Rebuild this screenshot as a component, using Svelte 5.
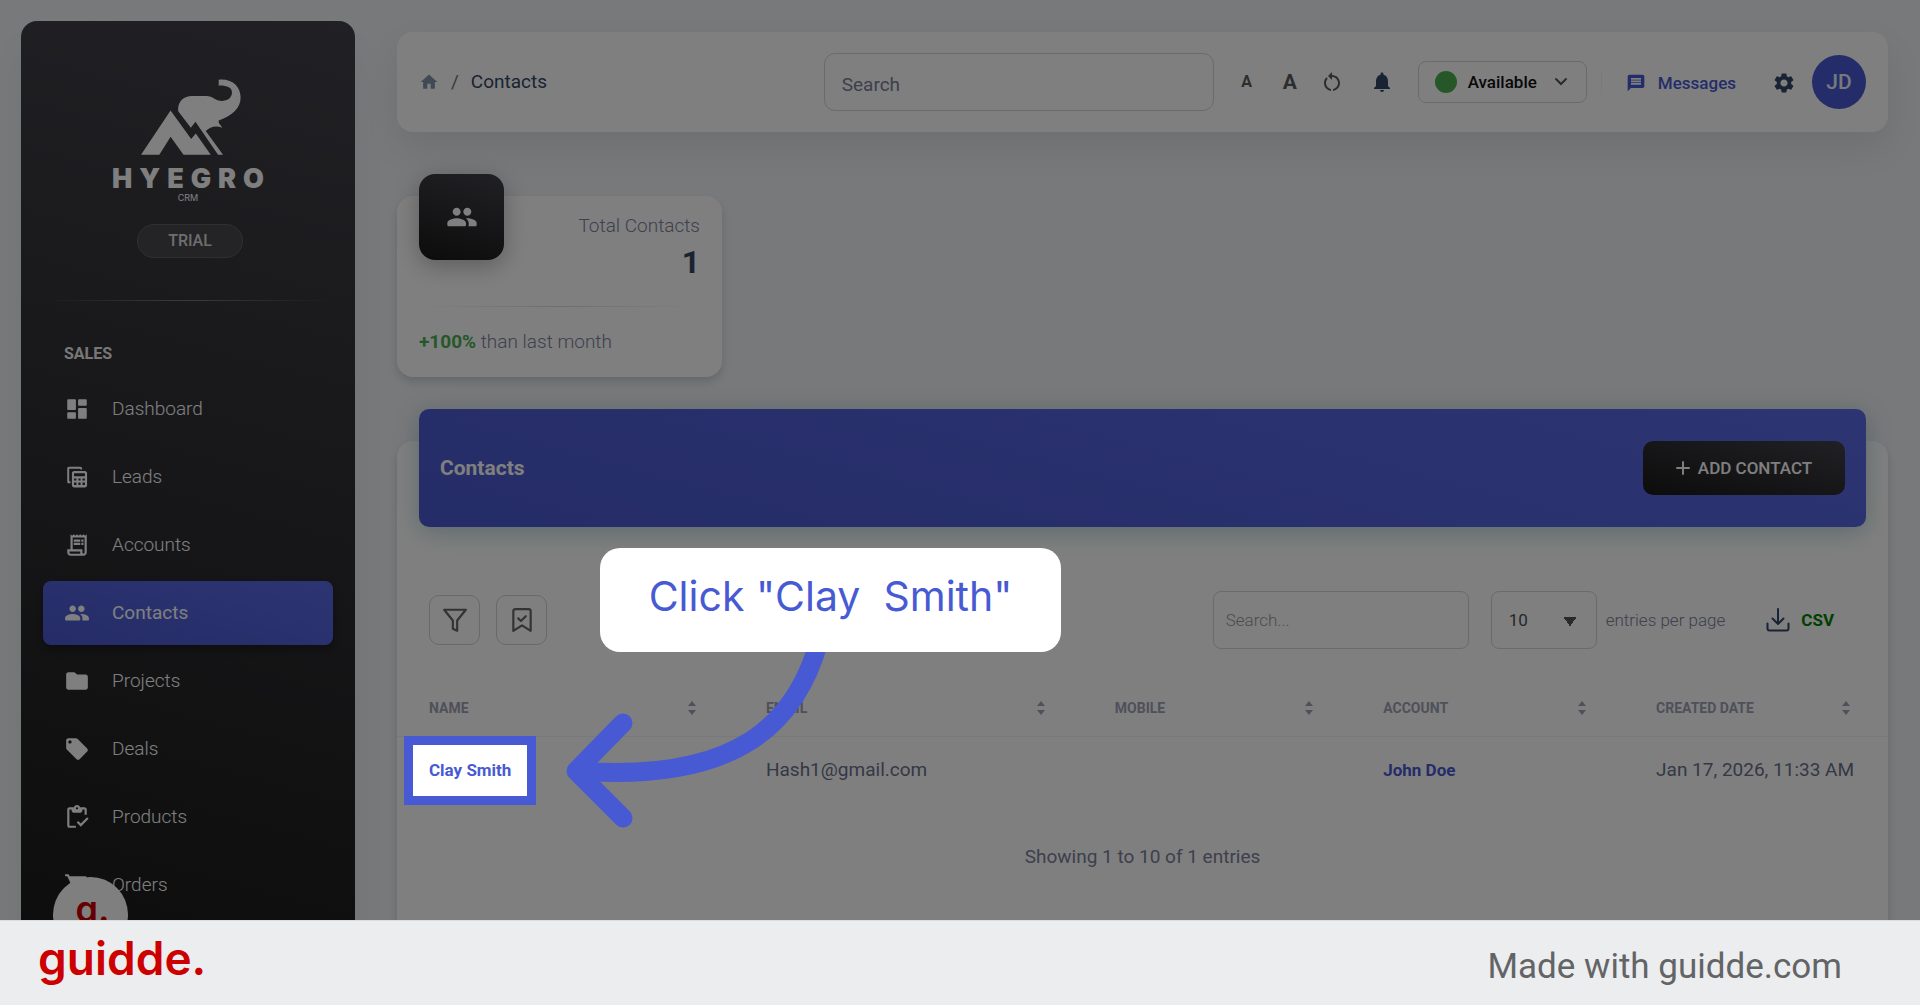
<script lang="ts">
  // Contacts page of the CRM with a guided-tour step on top of it.
  // The spotlight around the active link darkens everything else through
  // one oversized box-shadow, clipped by the stage.

  interface NavItem {
    label: string;
    icon: string;
  }

  interface Column {
    label: string;
    width: number;
  }

  const icons: Record<string, string> = {
    dashboard:
      "M4 3h6c.55 0 1 .45 1 1v8c0 .55-.45 1-1 1H4c-.55 0-1-.45-1-1V4c0-.55.45-1 1-1zm0 12h6c.55 0 1 .45 1 1v4c0 .55-.45 1-1 1H4c-.55 0-1-.45-1-1v-4c0-.55.45-1 1-1zm10-4h6c.55 0 1 .45 1 1v8c0 .55-.45 1-1 1h-6c-.55 0-1-.45-1-1v-8c0-.55.45-1 1-1zm0-8h6c.55 0 1 .45 1 1v4c0 .55-.45 1-1 1h-6c-.55 0-1-.45-1-1V4c0-.55.45-1 1-1z",
    leads:
      "M4.5 2.500H15c1 0 1.700.7 1.700 1.700V5H15V4.300H4.800V16H6v1.800H4.500C3.600 17.800 3 17.200 3 16.300V4.200c0-1 .6-1.700 1.500-1.700zM9.300 6.500h10c1.100 0 2 .9 2 2v11.200c0 1.100-.9 2-2 2h-10c-1.100 0-2-.9-2-2V8.500c0-1.100.9-2 2-2zm0 2v2.800h10V8.500zm0 4.800v1.900h2.200v-1.900zm4 0v1.900h2v-1.900zm3.800 0v1.900h2.200v-1.900zm-7.800 3.800v2.300h2.200v-2.300zm4 0v2.300h2v-2.300zm3.800 0v2.300h2.200v-2.300z",
    accounts:
      "M19.5 3.500L18 2l-1.500 1.500L15 2l-1.500 1.500L12 2l-1.500 1.500L9 2 7.500 3.500 6 2v14H3v3c0 1.660 1.340 3 3 3h12c1.660 0 3-1.340 3-3V2l-1.500 1.500zM15 20H6c-.55 0-1-.45-1-1v-1h10v2zm4-1c0 .55-.45 1-1 1s-1-.45-1-1v-3H8V5h11v14zM9 7h6v2H9zM16 7h2v2h-2zM9 10h6v2H9zM16 10h2v2h-2z",
    people:
      "M16 11c1.660 0 2.990-1.340 2.990-3S17.660 5 16 5s-3 1.340-3 3 1.340 3 3 3zm-8 0c1.660 0 2.990-1.340 2.990-3S9.660 5 8 5 5 6.340 5 8s1.340 3 3 3zm0 2c-2.330 0-7 1.170-7 3.500V18c0 .55.45 1 1 1h12c.55 0 1-.45 1-1v-1.500c0-2.330-4.670-3.500-7-3.500zm8 0c-.29 0-.62.02-.97.05 1.160.84 1.970 1.970 1.970 3.450V18c0 .35-.07.69-.18 1H22c.55 0 1-.45 1-1v-1.500c0-2.330-4.670-3.500-7-3.500z",
    folder:
      "M10.590 4.590C10.210 4.210 9.700 4 9.170 4H4c-1.100 0-2 .9-2 2v12c0 1.100.9 2 2 2h16c1.100 0 2-.9 2-2V8c0-1.100-.9-2-2-2h-8l-1.410-1.410z",
    tag: "M21.410 11.580l-9-9C12.050 2.220 11.550 2 11 2H4c-1.100 0-2 .9-2 2v7c0 .55.22 1.050.59 1.420l9 9c.36.36.86.58 1.410.58s1.050-.22 1.410-.59l7-7c.37-.36.59-.86.59-1.410s-.23-1.060-.59-1.420zM5.500 7C4.670 7 4 6.330 4 5.500S4.670 4 5.500 4 7 4.670 7 5.500 6.330 7 5.500 7z",
    products:
      "M5 5h2v1c0 1.100.9 2 2 2h6c1.100 0 2-.9 2-2V5h2v5h2V5c0-1.100-.9-2-2-2h-4.180C14.400 1.840 13.300 1 12 1s-2.400.84-2.820 2H5c-1.100 0-2 .9-2 2v15c0 1.100.9 2 2 2h6v-2H5V5zm7-2c.55 0 1 .45 1 1s-.45 1-1 1-1-.45-1-1 .45-1 1-1zM21.300 12.300l-5.790 5.790-2.400-2.400-1.410 1.410 3.810 3.810 7.200-7.200z",
    cart: "M15.550 13c.75 0 1.410-.41 1.750-1.030l3.580-6.490A.996.996 0 0 0 20.010 4H5.210l-.94-2H1v2h2l3.600 7.590-1.350 2.440C4.520 15.370 5.480 17 7 17h12v-2H7l1.100-2h7.450z",
    home: "M10 20v-6h4v6h5v-8h3L12 3 2 12h3v8z",
    reset:
      "M12 5V2L8 6l4 4V7c3.310 0 6 2.690 6 6 0 2.970-2.170 5.430-5 5.910v2.020c3.950-.49 7-3.850 7-7.930 0-4.420-3.580-8-8-8zm-6 8c0-1.650.67-3.150 1.760-4.240L6.340 7.340C4.900 8.790 4 10.790 4 13c0 4.080 3.050 7.440 7 7.930v-2.020c-2.830-.48-5-2.940-5-5.910z",
    bell: "M12 22c1.100 0 2-.9 2-2h-4c0 1.100.89 2 2 2zm6-6v-5c0-3.070-1.640-5.640-4.500-6.320V4c0-.83-.67-1.500-1.500-1.500s-1.500.67-1.500 1.500v.68C7.630 5.360 6 7.920 6 11v5l-2 2v1h16v-1l-2-2z",
    message:
      "M20 2H4c-1.100 0-1.990.9-1.990 2L2 22l4-4h14c1.100 0 2-.9 2-2V4c0-1.100-.9-2-2-2zm-2 12H6v-2h12v2zm0-3H6V9h12v2zm0-3H6V6h12v2z",
    gear: "M19.140 12.940c.04-.3.06-.61.06-.94 0-.32-.02-.64-.07-.94l2.030-1.580c.18-.14.23-.41.12-.61l-1.920-3.320c-.12-.22-.37-.29-.59-.22l-2.390.96c-.5-.38-1.030-.7-1.620-.94l-.36-2.540c-.04-.24-.24-.41-.48-.41h-3.840c-.24 0-.43.17-.47.41l-.36 2.540c-.59.24-1.130.57-1.620.94l-2.390-.96c-.22-.08-.47 0-.59.22L2.740 8.870c-.12.21-.08.47.12.61l2.030 1.580c-.05.3-.09.63-.09.94s.02.64.07.94l-2.030 1.580c-.18.14-.23.41-.12.61l1.920 3.320c.12.22.37.29.59.22l2.390-.96c.5.38 1.030.7 1.620.94l.36 2.540c.05.24.24.41.48.41h3.840c.24 0 .44-.17.47-.41l.36-2.540c.59-.24 1.130-.56 1.620-.94l2.390.96c.22.08.47 0 .59-.22l1.920-3.320c.12-.22.07-.47-.12-.61l-2.010-1.580zM12 15.600c-1.980 0-3.600-1.620-3.600-3.600s1.620-3.600 3.600-3.600 3.600 1.620 3.600 3.600-1.620 3.600-3.600 3.600z",
  };

  const nav: NavItem[] = [
    { label: "Dashboard", icon: "dashboard" },
    { label: "Leads", icon: "leads" },
    { label: "Accounts", icon: "accounts" },
    { label: "Contacts", icon: "people" },
    { label: "Projects", icon: "folder" },
    { label: "Deals", icon: "tag" },
    { label: "Products", icon: "products" },
    { label: "Orders", icon: "cart" },
  ];

  // widths are percentages of the table
  const columns: Column[] = [
    { label: "Name", width: 22.6 },
    { label: "Email", width: 23.4 },
    { label: "Mobile", width: 18 },
    { label: "Account", width: 18.3 },
    { label: "Created Date", width: 17.7 },
  ];

  let active = $state("Contacts");
  let pageSize = $state("10");
</script>

{#snippet icon(name: string)}
  <svg class="icon" viewBox="0 0 24 24" aria-hidden="true">
    <path fill="currentColor" fill-rule="evenodd" d={icons[name]} />
  </svg>
{/snippet}

<div class="page">
  <div class="stage">
    <aside class="sidebar">
      <div class="brand">
        <svg class="mark" viewBox="423 237 301 229" aria-hidden="true">
          <path d="M423 465 512 332l62 86 14-17 45 64h-82l-39-54-34 54z" />
          <path
            d="M657 239c42-4 66 22 66 53 0 33-24 55-66 70v7l11 15c-18-8-38-4-50 10l52 71h-15l-68-99-14 18-38-50c-3-28 16-46 41-46h44c20 0 26 15 48 15 20 0 29-13 29-25 0-16-17-22-40-21z"
          />
        </svg>
        <span class="wordmark">HYEGRO</span>
        <span class="crm">CRM</span>
        <span class="plan">TRIAL</span>
      </div>
      <hr class="side-rule" />
      <h2 class="group">SALES</h2>
      <nav>
        {#each nav as item (item.label)}
          <a
            href="#{item.label.toLowerCase()}"
            class="nav-item"
            class:active={active === item.label}
            onclick={() => (active = item.label)}
          >
            {@render icon(item.icon)}
            <span>{item.label}</span>
          </a>
        {/each}
      </nav>
    </aside>

    <main>
      <header class="topbar">
        <div class="crumbs">
          <a href="#home" aria-label="Home">{@render icon("home")}</a>
          <span class="slash">/</span>
          <span>Contacts</span>
        </div>
        <input class="search" type="search" placeholder="Search" aria-label="Search" />
        <div class="tools">
          <button class="tool font-small" aria-label="Smaller text">A</button>
          <button class="tool font-large" aria-label="Larger text">A</button>
          <button class="tool reset" aria-label="Reset text size">{@render icon("reset")}</button>
          <button class="tool" aria-label="Notifications">{@render icon("bell")}</button>
        </div>
        <button class="status">
          <span class="dot"></span>
          Available
          <svg class="chev" viewBox="0 0 14 10" aria-hidden="true">
            <path d="M2 2l5 5 5-5" fill="none" stroke="currentColor" stroke-width="2" stroke-linecap="round" />
          </svg>
        </button>
        <a class="messages" href="#messages">{@render icon("message")}Messages</a>
        <button class="tool gear" aria-label="Settings">{@render icon("gear")}</button>
        <button class="avatar">JD</button>
      </header>

      <section class="stat">
        <div class="stat-top">
          <div class="stat-icon">{@render icon("people")}</div>
          <div class="stat-text">
            <span>Total Contacts</span>
            <strong>1</strong>
          </div>
        </div>
        <hr class="stat-rule" />
        <p><b>+100%</b> than last month</p>
      </section>

      <section class="panel">
        <div class="banner">
          <h1>Contacts</h1>
          <button class="add">
            <svg viewBox="0 0 14 14" aria-hidden="true">
              <path d="M7 1v12M1 7h12" stroke="currentColor" stroke-width="2" stroke-linecap="round" />
            </svg>
            ADD CONTACT
          </button>
        </div>

        <div class="toolbar">
          <button class="square" aria-label="Filter">
            <svg viewBox="0 0 24 24" aria-hidden="true">
              <path d="M22 2.500H2l8 10V20l4 2v-9.500z" />
            </svg>
          </button>
          <button class="square" aria-label="Saved filters">
            <svg viewBox="0 0 24 24" aria-hidden="true">
              <path d="M20 22l-8-5-8 5V4a2 2 0 0 1 2-2h12a2 2 0 0 1 2 2zM8.500 10.500l2.500 2.500 4.500-4.500" />
            </svg>
          </button>
          <input class="filter" type="search" placeholder="Search..." aria-label="Search contacts" />
          <div class="size">
            <select id="page-size" bind:value={pageSize}>
              <option>10</option>
              <option>25</option>
              <option>50</option>
            </select>
            <label for="page-size">entries per page</label>
          </div>
          <a class="csv" href="#csv">
            <svg viewBox="0 0 24 24" aria-hidden="true">
              <path d="M12 1v15M6.500 10.500 12 16l5.500-5.500M1.500 15.500v5a2 2 0 0 0 2 2h17a2 2 0 0 0 2-2v-5" />
            </svg>
            CSV
          </a>
        </div>

        <table>
          <colgroup>
            {#each columns as col (col.label)}
              <col style="width: {col.width}%" />
            {/each}
          </colgroup>
          <thead>
            <tr>
              {#each columns as col (col.label)}
                <th>
                  <button class="sort">
                    {col.label}
                    <svg viewBox="0 0 8 14" aria-hidden="true">
                      <path d="M4 0l4 5H0zM4 14l4-5H0z" fill="currentColor" />
                    </svg>
                  </button>
                </th>
              {/each}
            </tr>
          </thead>
          <tbody>
            <tr>
              <td><a class="spotlight" href="#clay-smith">Clay Smith</a></td>
              <td>Hash1@gmail.com</td>
              <td></td>
              <td><a href="#john-doe">John Doe</a></td>
              <td>Jan 17, 2026, 11:33 AM</td>
            </tr>
          </tbody>
        </table>
        <p class="showing">Showing 1 to 10 of 1 entries</p>
      </section>
    </main>

    <button class="widget" aria-label="Open guides">g.</button>

    <svg class="arrow" viewBox="560 640 280 200" aria-hidden="true">
      <path d="M819 641C797 720 742 783 577 771M623 723l-47 48 47 47" />
    </svg>
    <div class="callout">Click "Clay&nbsp; Smith"</div>
  </div>

  <footer>
    <span class="logo">guidde.</span>
    <span class="made">Made with guidde.com</span>
  </footer>
</div>

<style>
  :global(body) {
    margin: 0;
  }
  .page {
    --accent: #485ad3;
    --navy: #344767;
    --muted: #7b809a;
    display: flex;
    flex-direction: column;
    height: 100vh;
    font-family: Roboto, "Liberation Sans", sans-serif;
    font-size: 19px;
    line-height: 24px;
    color: var(--navy);
  }
  .page *,
  .page *::before {
    box-sizing: border-box;
  }
  button,
  input,
  select {
    font: inherit;
    color: inherit;
    background: none;
    border: 0;
    padding: 0;
    margin: 0;
  }
  button {
    cursor: pointer;
  }
  a {
    color: inherit;
    text-decoration: none;
  }
  svg {
    display: block;
    flex: none;
  }
  .stage {
    position: relative;
    flex: 1;
    min-height: 0;
    overflow: hidden;
    display: flex;
    align-items: flex-start;
    gap: 42px;
    padding: 21px 32px 0 21px;
    background: #f0f2f5;
  }

  /* sidebar */
  .sidebar {
    flex: none;
    width: 334px;
    height: 963px;
    padding: 58px 22px 0;
    border-radius: 16px;
    background: linear-gradient(195deg, #42424a, #191919);
    box-shadow: 0 26px 36px rgba(0, 0, 0, 0.05);
    color: #fff;
  }
  .brand {
    display: flex;
    flex-direction: column;
    align-items: center;
  }
  .mark {
    width: 100px;
    height: 76px;
    margin-left: 6px;
    fill: #fff;
  }
  .wordmark {
    margin: 11px -7px 0 0;
    font: 900 27px/26px Inter, "Liberation Sans", sans-serif;
    letter-spacing: 7px;
  }
  .crm {
    margin: 1px 0 21px;
    font: 400 9px/10px Inter, sans-serif;
  }
  .plan {
    margin-left: 4px;
    padding: 4px 30px;
    border: 1px solid #606064;
    border-radius: 17px;
    background: #48484c;
    font-size: 16px;
    font-weight: 500;
    color: #dcdcdc;
  }
  .side-rule {
    height: 1px;
    margin: 42px 0 41px;
    border: 0;
    background: linear-gradient(90deg, transparent, #77777a, transparent);
  }
  .group {
    margin: 0 0 11px 21px;
    font-size: 16px;
    font-weight: 700;
    color: #eee;
  }
  nav {
    display: flex;
    flex-direction: column;
    gap: 4px;
  }
  .nav-item {
    display: flex;
    align-items: center;
    gap: 22px;
    height: 64px;
    padding-left: 21px;
    border-radius: 8px;
    font-weight: 300;
  }
  .nav-item .icon {
    width: 26px;
    height: 26px;
  }
  .nav-item.active {
    background: linear-gradient(195deg, #5969e6, #4a59cf);
    box-shadow: 0 4px 8px rgba(0, 0, 0, 0.3);
    font-weight: 400;
  }

  /* top bar */
  main {
    flex: 1;
    min-width: 0;
    padding-top: 11px;
  }
  .topbar {
    display: flex;
    align-items: center;
    height: 100px;
    padding: 0 22px;
    border-radius: 16px;
    background: #fff;
    box-shadow: 0 16px 36px rgba(0, 0, 0, 0.08);
  }
  .crumbs {
    display: flex;
    flex: 1;
    align-items: center;
    gap: 12px;
  }
  .crumbs .icon {
    width: 20px;
    height: 20px;
    color: #8392ab;
  }
  .slash {
    color: #6c757d;
  }
  .search {
    width: 390px;
    height: 58px;
    padding: 4px 17px 0;
    border: 1px solid #d2d6da;
    border-radius: 11px;
  }
  input::placeholder {
    color: var(--muted);
    opacity: 1;
  }
  .tools {
    display: flex;
    align-items: center;
    gap: 26px;
    margin: 0 24px 0 26px;
  }
  .tool .icon {
    width: 24px;
    height: 24px;
  }
  .font-small,
  .font-large,
  .reset {
    color: #5b5b5b;
    font-weight: 700;
  }
  .font-small {
    width: 14px;
    font-size: 16px;
  }
  .font-large {
    width: 20px;
    font-size: 21px;
  }
  .reset {
    margin-left: -6px;
  }
  .status {
    display: flex;
    align-items: center;
    gap: 11px;
    height: 42px;
    padding: 0 18px 0 16px;
    border: 1px solid #d2d6da;
    border-radius: 8px;
    font-size: 17px;
    font-weight: 500;
    color: #111;
  }
  .dot {
    width: 22px;
    height: 22px;
    border-radius: 50%;
    background: #4caf50;
  }
  .chev {
    width: 14px;
    height: 10px;
    margin-left: 6px;
    color: #555;
  }
  .messages {
    display: flex;
    align-items: center;
    gap: 12px;
    margin: 2px 36px 0 14px;
    padding-left: 24px;
    border-left: 1px solid #f5f5f5;
    font-size: 17px;
    font-weight: 500;
    color: var(--accent);
  }
  .messages .icon {
    width: 20px;
    height: 20px;
  }
  .gear {
    margin: 2px 16px 0 0;
  }
  .avatar {
    width: 54px;
    height: 54px;
    border-radius: 50%;
    background: var(--accent);
    color: #f0f2f5;
    font-size: 21px;
    font-weight: 500;
  }

  /* stat card */
  .stat {
    width: 325px;
    margin-top: 64px;
    padding: 0 22px 23px;
    border-radius: 16px;
    background: #fff;
    box-shadow: 0 5px 8px rgba(0, 0, 0, 0.14);
    font-weight: 300;
    color: var(--muted);
  }
  .stat-top {
    display: flex;
    justify-content: space-between;
  }
  .stat-icon {
    display: grid;
    place-items: center;
    width: 85px;
    height: 86px;
    margin-top: -22px;
    border-radius: 16px;
    background: linear-gradient(195deg, #42424a, #191919);
    box-shadow: 0 6px 24px rgba(0, 0, 0, 0.28);
    color: #fff;
  }
  .stat-icon .icon {
    width: 32px;
    height: 32px;
  }
  .stat-text {
    display: flex;
    flex-direction: column;
    align-items: flex-end;
    padding-top: 18px;
  }
  .stat-text strong {
    margin-top: 4px;
    font-size: 32px;
    font-weight: 700;
    line-height: 40px;
    color: var(--navy);
  }
  .stat-rule {
    height: 1px;
    margin: 24px 0 23px;
    border: 0;
    background: linear-gradient(90deg, transparent, #ddd, transparent);
  }
  .stat p {
    margin: 0;
  }
  .stat b {
    font-weight: 700;
    color: #4caf50;
  }

  /* contacts panel */
  .panel {
    display: flow-root;
    height: 500px;
    margin-top: 64px;
    border-radius: 16px;
    background: #fff;
    box-shadow: 0 5px 8px rgba(0, 0, 0, 0.14);
  }
  .banner {
    display: flex;
    align-items: center;
    justify-content: space-between;
    height: 118px;
    margin: -32px 22px 0;
    padding: 0 21px;
    border-radius: 10px;
    background: linear-gradient(195deg, #5969e6, #4a59cf);
    box-shadow: 0 5px 24px rgba(0, 100, 120, 0.28);
    color: #fff;
  }
  h1 {
    margin: 0;
    font-size: 21px;
    font-weight: 700;
  }
  .add {
    display: flex;
    align-items: center;
    justify-content: center;
    gap: 8px;
    width: 202px;
    height: 54px;
    border-radius: 10px;
    background: linear-gradient(195deg, #42424a, #191919);
    font-size: 17px;
    font-weight: 500;
  }
  .add svg {
    width: 14px;
    height: 14px;
  }
  .toolbar {
    display: flex;
    align-items: center;
    gap: 16px;
    margin-top: 64px;
    padding: 0 54px 0 32px;
  }
  .square {
    display: grid;
    place-items: center;
    width: 51px;
    height: 50px;
    border: 1px solid #d2d2d2;
    border-radius: 10px;
    color: #666;
  }
  .square svg {
    width: 26px;
    height: 26px;
  }
  .square svg,
  .csv svg {
    fill: none;
    stroke: currentColor;
    stroke-width: 2;
    stroke-linecap: round;
    stroke-linejoin: round;
  }
  .filter {
    width: 256px;
    height: 58px;
    margin-left: auto;
    padding: 0 12px;
    border: 1px solid #d2d6da;
    border-radius: 8px;
    font-size: 17px;
    font-weight: 300;
  }
  .filter::placeholder {
    color: #999;
  }
  .size {
    display: flex;
    align-items: center;
    gap: 9px;
    margin-left: 6px;
    font-size: 17px;
    font-weight: 300;
    color: var(--muted);
  }
  select {
    appearance: none;
    width: 106px;
    height: 58px;
    padding: 0 17px;
    border: 1px solid #d2d6da;
    border-radius: 8px;
    background:
      linear-gradient(54deg, transparent 50%, #555 0) 71px 25px / 7px 9px no-repeat,
      linear-gradient(-54deg, transparent 50%, #555 0) 78px 25px / 7px 9px no-repeat;
    font-weight: 400;
    color: #495057;
  }
  .csv {
    display: flex;
    align-items: center;
    gap: 11px;
    margin-left: 25px;
    font-size: 17px;
    font-weight: 700;
    color: #008000;
  }
  .csv svg {
    width: 24px;
    height: 24px;
    color: var(--navy);
  }
  table {
    width: 100%;
    margin-top: 31px;
    border-collapse: collapse;
    table-layout: fixed;
    color: #6b708c;
  }
  th {
    height: 56px;
    padding: 0 32px;
    border-bottom: 1px solid #f0f2f5;
    text-align: left;
  }
  .sort {
    display: flex;
    align-items: center;
    justify-content: space-between;
    width: 100%;
    padding-right: 6px;
    font-size: 14px;
    font-weight: 700;
    text-transform: uppercase;
    color: #9ea1b4;
  }
  .sort svg {
    width: 8px;
    height: 14px;
  }
  td {
    height: 68px;
    padding: 0 0 0 32px;
    white-space: nowrap;
  }
  td a {
    display: inline-block;
    font-size: 17px;
    font-weight: 700;
    line-height: 19px;
    color: var(--accent);
  }
  .showing {
    margin: 41px 0 0;
    text-align: center;
    color: var(--muted);
  }

  /* tour step */
  .spotlight {
    position: relative;
    z-index: 2;
  }
  .spotlight::before {
    content: "";
    position: absolute;
    inset: -25px;
    border: 9px solid var(--accent);
    box-shadow: 0 0 0 3000px rgba(0, 0, 0, 0.5);
    pointer-events: none;
  }
  .widget {
    position: absolute;
    left: 53px;
    bottom: -32px;
    z-index: 1;
    width: 75px;
    height: 75px;
    padding: 0 0 11px 4px;
    border-radius: 50%;
    background: #fff;
    font: 600 36px/40px Inter, sans-serif;
    color: #c00;
  }
  .arrow {
    position: absolute;
    left: 560px;
    top: 640px;
    z-index: 3;
    width: 280px;
    height: 200px;
    fill: none;
    stroke: var(--accent);
    stroke-width: 19;
    stroke-linecap: round;
    stroke-linejoin: round;
  }
  .callout {
    position: absolute;
    left: 600px;
    top: 548px;
    z-index: 4;
    width: 461px;
    height: 104px;
    padding-top: 18px;
    border-radius: 20px;
    background: #fff;
    font: 400 41px/60px Inter, sans-serif;
    text-align: center;
    color: var(--accent);
  }

  footer {
    display: flex;
    align-items: center;
    justify-content: space-between;
    flex: none;
    height: 85px;
    padding: 0 78px 0 38px;
    border-top: 1px solid #dcdddf;
    background: #ecedef;
  }
  .logo {
    padding-bottom: 10px;
    font: 600 46px/56px Inter, sans-serif;
    color: #c00;
  }
  .made {
    padding-top: 8px;
    font-size: 35px;
    line-height: 42px;
    color: #636466;
  }
</style>
